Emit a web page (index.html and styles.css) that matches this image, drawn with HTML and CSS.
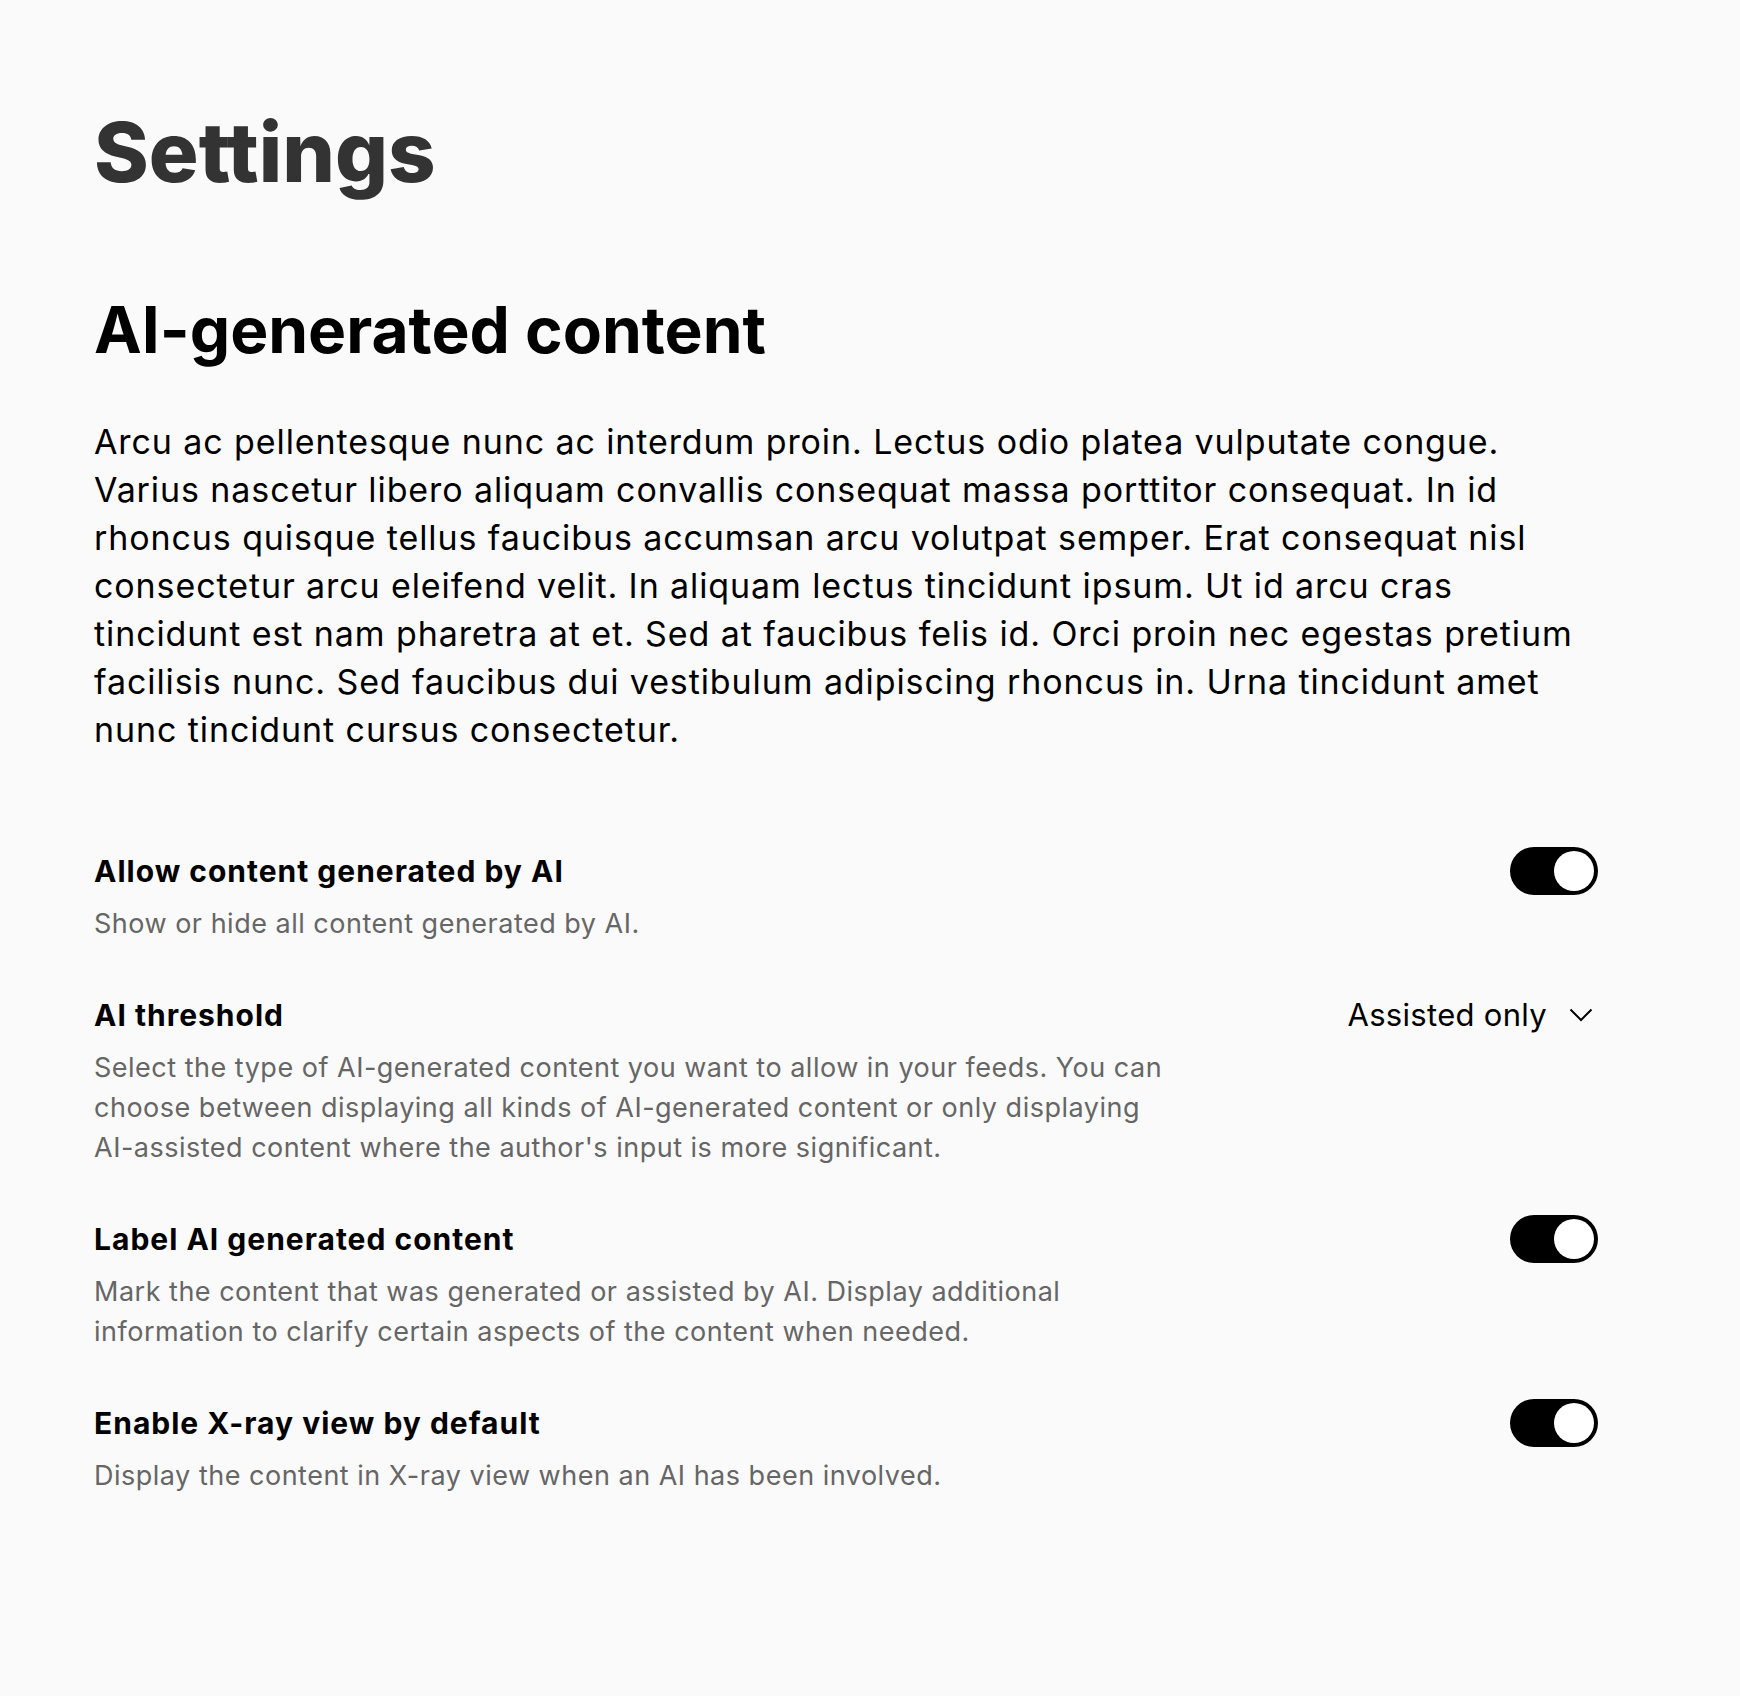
FILE: index.html
```html
<!DOCTYPE html>
<html lang="en">
<head>
<meta charset="utf-8">
<title>Settings</title>
<link rel="stylesheet" href="styles.css">
</head>
<body>
<main class="page">
  <h1 class="page-title">Settings</h1>
  <section class="section">
    <h2 class="section-title">AI-generated content</h2>
    <p class="intro">Arcu ac pellentesque nunc ac interdum proin. Lectus odio platea vulputate congue. Varius nascetur libero aliquam convallis consequat massa porttitor consequat. In id rhoncus quisque tellus faucibus accumsan arcu volutpat semper. Erat consequat nisl consectetur arcu eleifend velit. In aliquam lectus tincidunt ipsum. Ut id arcu cras tincidunt est nam pharetra at et. Sed at faucibus felis id. Orci proin nec egestas pretium facilisis nunc. Sed faucibus dui vestibulum adipiscing rhoncus in. Urna tincidunt amet nunc tincidunt cursus consectetur.</p>
    <ul class="settings-list">
      <li class="setting-row">
        <div class="setting-text">
          <h3 class="setting-title">Allow content generated by AI</h3>
          <p class="setting-desc">Show or hide all content generated by AI.</p>
        </div>
        <button class="toggle is-on" type="button" role="switch" aria-checked="true"><span class="toggle-knob"></span></button>
      </li>
      <li class="setting-row">
        <div class="setting-text">
          <h3 class="setting-title">AI threshold</h3>
          <p class="setting-desc">Select the type of AI-generated content you want to allow in your feeds. You can choose between displaying all kinds of AI-generated content or only displaying AI-assisted content where the author's input is more significant.</p>
        </div>
        <button class="select" type="button">
          <span class="select-value">Assisted only</span>
          <svg class="select-chevron" width="24" height="14" viewBox="0 0 24 14" aria-hidden="true"><polyline points="1.5,1.5 12,12 22.5,1.5" fill="none" stroke="#000" stroke-width="2"/></svg>
        </button>
      </li>
      <li class="setting-row">
        <div class="setting-text">
          <h3 class="setting-title">Label AI generated content</h3>
          <p class="setting-desc">Mark the content that was generated or assisted by AI. Display additional information to clarify certain aspects of the content when needed.</p>
        </div>
        <button class="toggle is-on" type="button" role="switch" aria-checked="true"><span class="toggle-knob"></span></button>
      </li>
      <li class="setting-row">
        <div class="setting-text">
          <h3 class="setting-title">Enable X-ray view by default</h3>
          <p class="setting-desc">Display the content in X-ray view when an AI has been involved.</p>
        </div>
        <button class="toggle is-on" type="button" role="switch" aria-checked="true"><span class="toggle-knob"></span></button>
      </li>
    </ul>
  </section>
</main>
</body>
</html>
```
FILE: styles.css
```css
* {
  box-sizing: border-box;
}

html, body {
  margin: 0;
  padding: 0;
  background: #fafafa;
}

body {
  font-family: Inter, "Noto Sans", "Liberation Sans", sans-serif;
  color: #000;
}

.page {
  width: 1504px;
  margin-left: 94px;
  padding-top: 104px;
  padding-bottom: 120px;
}

.page-title {
  margin: 0;
  font-size: 83px;
  line-height: 96px;
  font-weight: 800;
  color: #333;
}

.section {
  margin-top: 91px;
}

.section-title {
  margin: 0;
  font-size: 64px;
  line-height: 77px;
  font-weight: 700;
  color: #000;
}

.intro {
  margin: 50px 0 0;
  font-size: 34px;
  line-height: 48px;
  letter-spacing: 0.9px;
  font-weight: 400;
  color: #000;
}

.settings-list {
  list-style: none;
  margin: 96px 0 0;
  padding: 0;
  display: flex;
  flex-direction: column;
  gap: 50px;
}

.setting-row {
  display: flex;
  justify-content: space-between;
  align-items: flex-start;
}

.setting-title {
  margin: 0;
  font-size: 30px;
  line-height: 42px;
  letter-spacing: 1px;
  font-weight: 700;
  color: #000;
}

.setting-desc {
  margin: 12px 0 0;
  max-width: 1075px;
  font-size: 27px;
  line-height: 40px;
  letter-spacing: 0.5px;
  font-weight: 400;
  color: #666;
}

.toggle {
  flex: none;
  width: 88px;
  height: 48px;
  margin-top: -3px;
  padding: 4px;
  border: none;
  border-radius: 24px;
  background: #000;
  display: flex;
  justify-content: flex-end;
  align-items: center;
  cursor: pointer;
}

.toggle-knob {
  width: 40px;
  height: 40px;
  border-radius: 50%;
  background: #fff;
}

.select {
  flex: none;
  display: flex;
  align-items: center;
  gap: 22px;
  padding: 0 5px 0 0;
  border: none;
  background: transparent;
  font-family: inherit;
  font-size: 31px;
  line-height: 42px;
  letter-spacing: 0.3px;
  color: #000;
  cursor: pointer;
}

.select-chevron {
  display: block;
}
```
